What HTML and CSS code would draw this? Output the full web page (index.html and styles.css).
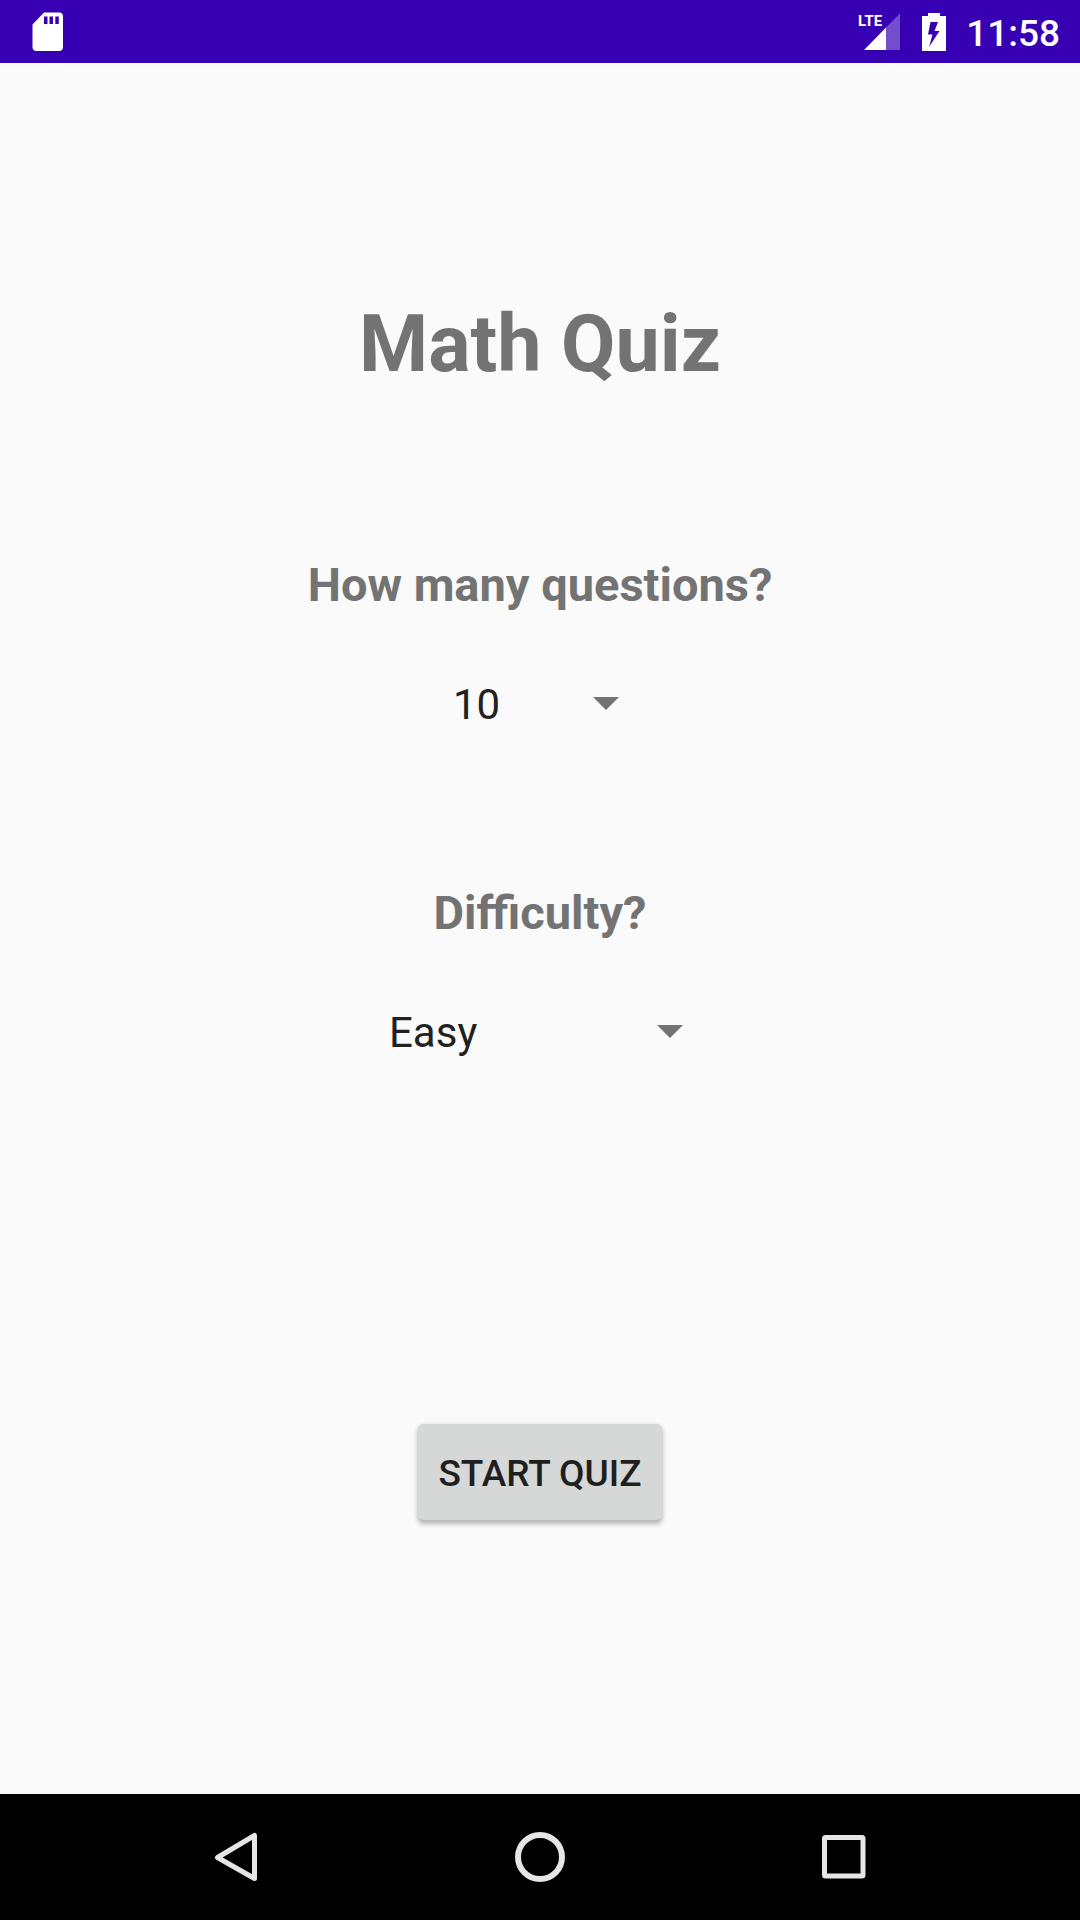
FILE: index.html
```html
<!DOCTYPE html>
<html lang="en">
<head>
<meta charset="utf-8">
<meta name="viewport" content="width=device-width, initial-scale=1">
<title>Math Quiz</title>
<link rel="stylesheet" href="styles.css">
</head>
<body>
<div class="app">
  <header class="status-bar">
    <svg class="sd-icon" width="32" height="40" viewBox="0 0 32 40" aria-hidden="true">
      <path fill="#fff" fill-rule="evenodd" d="M12 0.500H27a4 4 0 0 1 4 4V35a4 4 0 0 1-4 4H4.500a4 4 0 0 1-4-4V12.500zM12 4.500V12h3.500V4.500zM17.500 4.500V12H21V4.500zM23.300 4.500V12h3.500V4.500z"/>
    </svg>
    <div class="status-right">
      <div class="signal">
        <span class="network">LTE</span>
        <svg class="signal-icon" width="36" height="37" viewBox="0 0 36 37" aria-hidden="true">
          <path fill="#fff" fill-opacity=".3" d="M22 14.500L36.500 0V37H22z"/>
          <path fill="#fff" d="M0 37L22 14.500V37z"/>
        </svg>
      </div>
      <svg class="battery-icon" width="24" height="38" viewBox="0 0 24 38" aria-hidden="true">
        <path fill="#fff" fill-rule="evenodd" d="M6 0H18V3H24V38H0V3H6zM8.500 9L6 21.500H10.500L7 34L17.500 18H12.500L16 9z"/>
      </svg>
      <time class="clock">11:58</time>
    </div>
  </header>

  <main class="content">
    <h1 class="title">Math Quiz</h1>
    <form class="quiz-form">
      <div class="field">
        <label class="question" for="count">How many questions?</label>
        <div class="spinner spinner-count">
          <select class="spinner-select" id="count">
            <option>5</option>
            <option selected>10</option>
            <option>20</option>
          </select>
        </div>
      </div>
      <div class="field">
        <label class="question" for="difficulty">Difficulty?</label>
        <div class="spinner spinner-difficulty">
          <select class="spinner-select" id="difficulty">
            <option selected>Easy</option>
            <option>Medium</option>
            <option>Hard</option>
          </select>
        </div>
      </div>
      <button class="start" type="button">START QUIZ</button>
    </form>
  </main>

  <nav class="nav-bar">
    <button class="nav-button" type="button" aria-label="Back">
      <svg width="50" height="50" viewBox="0 0 50 50"><path d="M43.500 3.500V46.500L6.500 25.500z"/></svg>
    </button>
    <button class="nav-button" type="button" aria-label="Home">
      <svg width="50" height="50" viewBox="0 0 50 50"><circle class="home-ring" cx="25" cy="25" r="22"/></svg>
    </button>
    <button class="nav-button" type="button" aria-label="Recent apps">
      <svg width="50" height="50" viewBox="0 0 50 50"><rect x="5.500" y="5.500" width="38.500" height="38.500" rx="1"/></svg>
    </button>
  </nav>
</div>
</body>
</html>
```
FILE: styles.css
```css
* {
  box-sizing: border-box;
}

body {
  margin: 0;
  background: #fafafa;
  font-family: Roboto, sans-serif;
}

.app {
  display: flex;
  flex-direction: column;
  min-height: 100vh;
}

.status-bar {
  display: flex;
  justify-content: space-between;
  align-items: center;
  height: 63px;
  padding: 0 20px 0 32px;
  background: #3700b3;
  color: #fff;
}

.status-right {
  display: flex;
  align-items: center;
}

.signal {
  display: flex;
  align-items: flex-start;
  margin-right: 22px;
}

.network {
  margin-right: -18px;
  font-size: 15px;
  font-weight: 700;
  line-height: 16px;
}

.battery-icon {
  margin-right: 20px;
}

.clock {
  padding-top: 4px;
  font-size: 37px;
  font-weight: 500;
  line-height: 44px;
}

.content {
  flex: 1;
  display: flex;
  flex-direction: column;
  align-items: center;
  padding: 235px 16px 64px;
}

.title {
  margin: 0 0 167px;
  color: #737373;
  font-size: 79px;
  font-weight: 700;
  line-height: 92px;
}

.quiz-form,
.field {
  display: flex;
  flex-direction: column;
  align-items: center;
}

.field {
  gap: 59px;
  margin-bottom: 149px;
}

.question {
  color: #737373;
  font-size: 47px;
  font-weight: 700;
  line-height: 56px;
}

.spinner {
  position: relative;
}

.spinner-count {
  width: 216px;
}

.spinner-difficulty {
  width: 344px;
}

.spinner::after {
  content: "";
  position: absolute;
  top: 25px;
  right: 29px;
  width: 26px;
  height: 13px;
  background: #737373;
  clip-path: polygon(0 0, 100% 0, 50% 100%);
  pointer-events: none;
}

.spinner-select {
  display: block;
  appearance: none;
  width: 100%;
  height: 64px;
  padding: 0 64px 0 21px;
  border: 0;
  background: transparent;
  color: #212121;
  font-family: inherit;
  font-size: 42px;
}

.start {
  margin-top: 211px;
  padding: 2px 20px 0;
  height: 96px;
  border: 0;
  border-radius: 5px;
  background: #d6d8d7;
  box-shadow: 0 4px 5px rgba(0, 0, 0, .26), 0 0 4px rgba(0, 0, 0, .1);
  color: #1f1f1f;
  font-family: inherit;
  font-size: 37px;
  font-weight: 500;
}

.nav-bar {
  display: grid;
  grid-template-columns: repeat(3, 1fr);
  height: 126px;
  padding: 0 84px;
  background: #000;
}

.nav-button {
  display: flex;
  justify-content: center;
  align-items: center;
  padding: 0;
  border: 0;
  background: transparent;
}

.nav-button svg {
  fill: none;
  stroke: #e6e6e6;
  stroke-width: 5;
  stroke-linejoin: round;
}

.nav-button .home-ring {
  stroke-width: 6;
}
```
